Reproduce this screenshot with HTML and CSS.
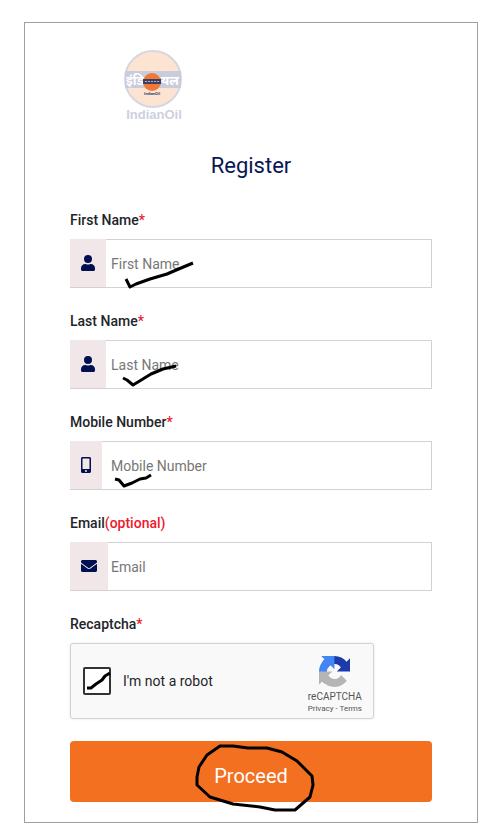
FILE: index.html
```html
<!DOCTYPE html>
<html lang="en">
<head>
    <meta charset="UTF-8">
    <meta name="viewport" content="width=device-width, initial-scale=1.0">
    <title>Register</title>
    <link rel="stylesheet" href="styles.css">
</head>
<body>
    <main class="card">
        <svg class="logo" viewBox="0 0 60 74" role="img" aria-label="IndianOil">
            <circle cx="30" cy="30" r="28" fill="#fde3d2" stroke="#d6d7e0" stroke-width="2"/>
            <rect x="2" y="22" width="56" height="17" fill="#c9ccda"/>
            <text class="logo-hindi" x="3" y="36">इंडि</text>
            <text class="logo-hindi" x="38" y="36">यल</text>
            <circle cx="29" cy="33" r="9" fill="#f07a35"/>
            <rect x="20" y="30" width="18" height="5" fill="#3b3f66"/>
            <path d="M22 32.5h14" stroke="#b9b4c4" stroke-width="1" stroke-dasharray="2 1"/>
            <text class="logo-small" x="29" y="46" text-anchor="middle">IndianOil</text>
            <text class="logo-name" x="31" y="70" text-anchor="middle">IndianOil</text>
        </svg>

        <h1>Register</h1>

        <form>
            <div class="form-group">
                <label for="first-name">First Name<span class="red">*</span></label>
                <div class="input-group">
                    <span class="addon">
                        <svg width="14" height="16" viewBox="0 0 448 512"><path d="M224 256a128 128 0 1 0 0-256 128 128 0 0 0 0 256zm90 32h-17a174 174 0 0 1-146 0h-17C60 288 0 348 0 422v42c0 26 22 48 48 48h352c26 0 48-22 48-48v-42c0-74-60-134-134-134z"/></svg>
                    </span>
                    <input type="text" id="first-name" placeholder="First Name">
                    <svg class="mark" viewBox="0 0 362 49"><path d="M56 40l4 8 6-3 14-5 17-5 14-6 12-5"/></svg>
                </div>
            </div>

            <div class="form-group">
                <label for="last-name">Last Name<span class="red">*</span></label>
                <div class="input-group">
                    <span class="addon">
                        <svg width="14" height="16" viewBox="0 0 448 512"><path d="M224 256a128 128 0 1 0 0-256 128 128 0 0 0 0 256zm90 32h-17a174 174 0 0 1-146 0h-17C60 288 0 348 0 422v42c0 26 22 48 48 48h352c26 0 48-22 48-48v-42c0-74-60-134-134-134z"/></svg>
                    </span>
                    <input type="text" id="last-name" placeholder="Last Name">
                    <svg class="mark" viewBox="0 0 362 49"><path d="M53 38l4 2 6 5 5-3 13-8 12-5 13-3"/></svg>
                </div>
            </div>

            <div class="form-group">
                <label for="mobile">Mobile Number<span class="red">*</span></label>
                <div class="input-group">
                    <span class="addon">
                        <svg width="10" height="16" viewBox="0 0 320 512"><path fill-rule="evenodd" d="M272 0H48C22 0 0 22 0 48v416c0 26 22 48 48 48h224c26 0 48-22 48-48V48c0-26-22-48-48-48zM160 480a32 32 0 1 1 0-64 32 32 0 0 1 0 64zm112-108c0 7-5 12-12 12H60c-7 0-12-5-12-12V60c0-7 5-12 12-12h200c7 0 12 5 12 12z"/></svg>
                    </span>
                    <input type="tel" id="mobile" placeholder="Mobile Number">
                    <svg class="mark" viewBox="0 0 362 49"><path d="M45 38l4 1 5 6 8-3 8-4 6-1 5-3"/></svg>
                </div>
            </div>

            <div class="form-group">
                <label for="email">Email<span class="red">(optional)</span></label>
                <div class="input-group">
                    <span class="addon">
                        <svg width="16" height="16" viewBox="0 0 512 512"><path d="M502 191c4-3 10 0 10 5v204c0 26-22 48-48 48H48c-26 0-48-22-48-48V196c0-5 6-8 10-5 22 17 52 40 154 114 21 15 57 48 92 47 35 1 72-32 92-47 102-74 132-97 154-114zM256 320c23 0 56-29 73-41 133-97 143-105 174-129 6-5 9-12 9-19v-19c0-26-22-48-48-48H48c-26 0-48 22-48 48v19c0 7 3 14 9 19 31 24 41 32 174 129 17 12 50 41 73 41z"/></svg>
                    </span>
                    <input type="email" id="email" placeholder="Email">
                </div>
            </div>

            <div class="form-group">
                <label for="robot">Recaptcha<span class="red">*</span></label>
                <div class="captcha">
                    <div class="check">
                        <input type="checkbox" id="robot">
                        <svg class="mark" viewBox="0 0 28 28"><path d="M4 21h4l5-4 6-4 3-4 5-3"/></svg>
                    </div>
                    <label class="robot-label" for="robot">I'm not a robot</label>
                    <div class="captcha-brand">
                        <svg width="31" height="31" viewBox="0 0 64 64">
                            <path fill="#1c3aa9" d="M64 31.955l-.002-1.382V4.687l-7.157 7.157C50.983 4.676 42.07.093 32.087.093c-10.39 0-19.62 4.96-25.462 12.64l11.732 11.855a15.55 15.55 0 0 1 4.754-5.334c2.05-1.6 4.952-2.906 8.968-2.906.485 0 .86.057 1.135.163 4.976.393 9.288 3.14 11.828 7.124l-8.304 8.304L64 31.955"/>
                            <path fill="#4285f4" d="M31.862.094l-1.382.002H4.594l7.157 7.157C4.583 13.11 0 22.023 0 32.006c0 10.39 4.96 19.62 12.64 25.462l11.855-11.732a15.55 15.55 0 0 1-5.334-4.754c-1.6-2.05-2.906-4.952-2.906-8.968 0-.485.057-.86.163-1.135.393-4.976 3.14-9.288 7.124-11.828l8.304 8.304L31.862.094"/>
                            <path fill="#b5b5b5" d="M.001 32.045v27.265l7.157-7.157c5.858 7.168 14.77 11.75 24.754 11.75 10.39 0 19.62-4.96 25.462-12.64L45.642 39.41a15.55 15.55 0 0 1-4.754 5.334c-2.05 1.6-4.952 2.906-8.968 2.906-.485 0-.86-.057-1.135-.163-4.976-.393-9.288-3.14-11.828-7.124l8.304-8.304L.001 32.045"/>
                        </svg>
                        <span class="captcha-name">reCAPTCHA</span>
                        <span class="captcha-links"><a href="#">Privacy</a> - <a href="#">Terms</a></span>
                    </div>
                </div>
            </div>

            <div class="submit">
                <button type="submit">Proceed</button>
                <!-- hand-drawn ring around the button text -->
                <svg class="ring" viewBox="0 0 120 70"><path d="M24 3h13l15 2h19l15 4 15 9 15 15 1 9-3 12-15 13H79l-15-3-27-3-23-7L1 42v-8l2-10 8-12z"/></svg>
            </div>
        </form>
    </main>
</body>
</html>
```
FILE: styles.css
```css
* {
    box-sizing: border-box;
}
body {
    margin: 0;
    padding: 22px 22px 12px 24px;
    background-color: #fff;
    font-family: Roboto, Arial, sans-serif;
    font-size: 14px;
    color: #212529;
}
.card {
    border: 1px solid #a0a0a0;
    padding: 25px 45px 20px;
}
.logo {
    display: block;
    width: 60px;
    height: 74px;
    margin: 1px 0 0 53px;
}
.logo-hindi {
    font-family: "Noto Sans", sans-serif;
    font-size: 13px;
    font-weight: bold;
    fill: #fff;
}
.logo-small {
    font-size: 4px;
    font-weight: bold;
    fill: #3b3f66;
}
.logo-name {
    font-family: "Liberation Sans", Arial, sans-serif;
    font-size: 13px;
    font-weight: bold;
    fill: #ced0dd;
}
h1 {
    margin: 29px 0 30px;
    font-size: 22px;
    font-weight: 400;
    line-height: 28px;
    text-align: center;
    color: #0a1650;
}
.form-group {
    margin-bottom: 23px;
}
.form-group label {
    display: block;
    margin-bottom: 9px;
    font-weight: 500;
    line-height: 20px;
}
.red {
    color: #f0182c;
}
.input-group {
    position: relative;
    display: flex;
    height: 49px;
}
.addon {
    display: flex;
    align-items: center;
    padding: 0 11px;
    background-color: #f1e7e9;
    border-bottom: 1px solid #d4d0d1;
}
.addon svg {
    fill: #020f50;
}
.input-group input {
    flex: 1;
    min-width: 0;
    padding: 0 5px;
    border: 1px solid #d2d2d2;
    border-left: 0;
    background-color: #fff;
    font-family: inherit;
    font-size: 14px;
}
#mobile {
    padding-left: 9px;
}
#email {
    padding-left: 3px;
}
.input-group input::placeholder {
    color: #777;
    opacity: 1;
}
.mark,
.ring {
    position: absolute;
    fill: none;
    stroke: #000;
    stroke-width: 3;
    stroke-linejoin: round;
    pointer-events: none;
    overflow: visible;
}
.mark {
    top: 0;
    left: 0;
    height: 100%;
}
.captcha {
    display: flex;
    align-items: center;
    max-width: 304px;
    height: 76px;
    padding: 0 11px 0 12px;
    background-color: #f9f9f9;
    border: 1px solid #d3d3d3;
    border-radius: 3px;
    box-shadow: 0 0 3px rgba(0,0,0,0.1);
}
.check {
    position: relative;
    width: 28px;
    height: 28px;
}
.check input {
    display: block;
    appearance: none;
    width: 28px;
    height: 28px;
    margin: 0;
    border: 2px solid #333;
    border-radius: 2px;
    background-color: #fff;
}
.captcha .robot-label {
    flex: 1;
    margin: 0 0 0 12px;
    font-weight: 400;
}
.captcha-brand {
    display: flex;
    flex-direction: column;
    align-items: center;
    padding-top: 8px;
    color: #555;
}
.captcha-name {
    margin-top: 4px;
    font-size: 10px;
    line-height: 12px;
}
.captcha-links {
    font-size: 8px;
    line-height: 12px;
}
.captcha-links a {
    color: inherit;
    text-decoration: none;
}
.submit {
    position: relative;
    margin-top: -1px;
}
button {
    display: block;
    width: 100%;
    height: 61px;
    border: 0;
    border-radius: 4px;
    background-color: #f37021;
    color: #fff;
    font-family: inherit;
    font-size: 20px;
    padding-top: 10px;
    cursor: pointer;
}
.ring {
    top: 2px;
    left: 50%;
    width: 120px;
    height: 70px;
    margin-left: -55px;
}
```
